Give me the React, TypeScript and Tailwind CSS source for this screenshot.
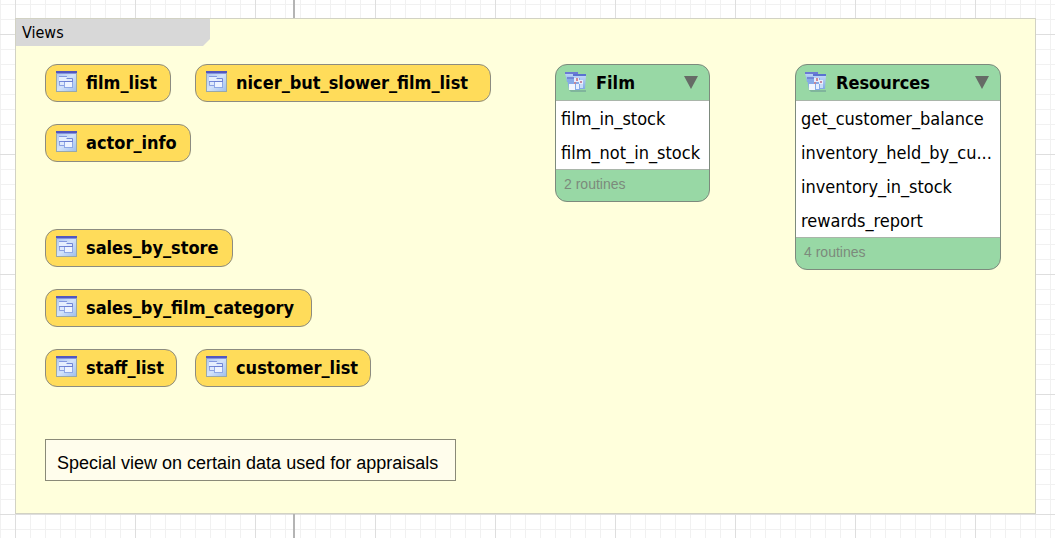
import type { ReactNode } from "react";

function ViewIcon() {
  return (
    <svg width="21" height="21" viewBox="0 0 21 21" aria-hidden="true" className="shrink-0">
      <defs>
        <linearGradient id="viewBody" x1="0" y1="0" x2="1" y2="1">
          <stop offset="0" stopColor="#a9c2f0" />
          <stop offset="0.5" stopColor="#d3e3fa" />
          <stop offset="1" stopColor="#9cbdec" />
        </linearGradient>
      </defs>
      <rect x="0.5" y="0.5" width="20" height="20" fill="url(#viewBody)" stroke="#9aa9a8" />
      <rect x="0" y="0" width="21" height="2" fill="#5257bf" />
      <rect x="1" y="2" width="19" height="1" fill="#8593de" />
      <rect x="3" y="5" width="8" height="6" fill="#e6effd" />
      <rect x="3" y="5" width="8" height="1" fill="#8398e0" />
      <path d="M10.5 7.500h6v4" fill="none" stroke="#7388d8" />
      <rect x="11" y="8" width="5" height="2" fill="#dfeafc" />
      <path d="M3.500 10.500v4h5" fill="none" stroke="#8da2e2" />
      <rect x="3" y="10" width="6" height="1" fill="#7388d8" />
      <rect x="4" y="11" width="4" height="3" fill="#dfeafc" />
      <rect x="8" y="10" width="9" height="7" fill="#8fa9e6" />
      <rect x="9" y="11" width="7" height="5" fill="#eef4ff" />
      <rect x="8" y="10" width="9" height="1" fill="#6c80d4" />
    </svg>
  );
}

function RoutineIcon() {
  return (
    <svg width="22" height="22" viewBox="0 0 22 22" aria-hidden="true" className="shrink-0">
      <defs>
        <linearGradient id="routineBody" x1="0" y1="0" x2="0" y2="1">
          <stop offset="0" stopColor="#c3d9f8" />
          <stop offset="1" stopColor="#7fa9e4" />
        </linearGradient>
      </defs>
      <path d="M4 18h17v2H6z" fill="#6f9f96" opacity="0.6" />
      <path d="M0 1h13v9H2z" fill="url(#routineBody)" />
      <rect x="0" y="0" width="13" height="2" fill="#6c7ad4" />
      <path d="M8 3h13l-1 14h-9z" fill="url(#routineBody)" />
      <rect x="8" y="2" width="13" height="2" fill="#5a72d0" />
      <path d="M2 6h13v12H4z" fill="#86aae8" />
      <rect x="2" y="5" width="7" height="2" fill="#7488d8" />
      <rect x="4" y="12" width="6" height="6" fill="#f2f6ff" />
      <path d="M9 6h5v4H9zM14 8h4v4h-4z" fill="#e8eefc" />
      <rect x="11" y="12" width="3" height="5" fill="#e8f0ff" />
      <rect x="15" y="12" width="3" height="4" fill="#c8dcf8" />
      <rect x="11" y="6" width="2" height="3" fill="#cf8796" />
      <rect x="9" y="10" width="2" height="2" fill="#c4899c" />
      <rect x="15" y="9" width="2" height="2" fill="#c58ba2" />
    </svg>
  );
}

function ViewNode({ name, place }: { name: string; place: string }) {
  return (
    <div
      className={`absolute flex h-[38px] items-center gap-[9px] rounded-xl border border-[#8c8c80] bg-[#ffdc5a] pr-[11px] pl-[10px] text-lg font-bold whitespace-nowrap ${place}`}
    >
      <div className="pb-1">
        <ViewIcon />
      </div>
      <span>{name}</span>
    </div>
  );
}

function RoutineGroup({ name, routines, place }: { name: string; routines: string[]; place: string }) {
  return (
    <section className={`absolute overflow-hidden rounded-xl border border-[#7d8a7d] bg-[#98d8a5] ${place}`}>
      <header className="flex h-[35px] items-center gap-[9px] pr-[11px] pl-[9px]">
        <RoutineIcon />
        <h2 className="flex-1 text-lg font-bold">{name}</h2>
        <button type="button" aria-label={`Collapse ${name}`}>
          <svg width="14" height="13" viewBox="0 0 14 13">
            <path d="M0 0h14L7 13z" fill="#666b66" />
          </svg>
        </button>
      </header>
      <ul className="border-y border-[#a9b5a9] bg-white text-lg">
        {routines.map((routine) => (
          <li key={routine} className="h-[34px] pl-[5px] leading-[36px] whitespace-nowrap">
            {routine}
          </li>
        ))}
      </ul>
      <footer className="h-[31px] pl-2 font-['Liberation_Sans',sans-serif] text-sm leading-[28px] text-[#7c8a7c]">
        {routines.length} routines
      </footer>
    </section>
  );
}

function Layer({ title, children }: { title: string; children: ReactNode }) {
  return (
    <section className="relative h-[496px] border border-[#d2d2c4] bg-[#ffffdc]">
      <h1 className="h-[27px] w-[194px] bg-[#d8d8d8] pl-[6px] text-base leading-[27px] [clip-path:polygon(0_0,100%_0,100%_20px,187px_100%,0_100%)]">
        {title}
      </h1>
      {children}
    </section>
  );
}

export default function App() {
  return (
    <main className="relative min-h-screen bg-white bg-[linear-gradient(90deg,#dedede_1px,transparent_1px),linear-gradient(#dedede_1px,transparent_1px),linear-gradient(90deg,#f1f1f1_1px,transparent_1px),linear-gradient(#f1f1f1_1px,transparent_1px)] bg-[size:120px_120px,120px_120px,15px_15px,15px_15px] bg-[position:15px_34px,15px_34px,0_4px,0_4px] pt-[18px] pr-[19px] pb-6 pl-[15px] font-['DejaVu_Sans_Condensed',Tahoma,'DejaVu_Sans',sans-serif] text-black">
      <div className="absolute inset-y-0 left-[293px] w-[2px] bg-[#b4b4b4]" />
      <Layer title="Views">
        <ViewNode name="film_list" place="top-[45px] left-[29px] min-w-[126px]" />
        <ViewNode name="nicer_but_slower_film_list" place="top-[45px] left-[179px] min-w-[296px]" />
        <ViewNode name="actor_info" place="top-[105px] left-[29px] min-w-[146px]" />
        <ViewNode name="sales_by_store" place="top-[210px] left-[29px] min-w-[188px]" />
        <ViewNode name="sales_by_film_category" place="top-[270px] left-[29px] min-w-[267px]" />
        <ViewNode name="staff_list" place="top-[330px] left-[29px] min-w-[132px]" />
        <ViewNode name="customer_list" place="top-[330px] left-[179px] min-w-[176px]" />
        <RoutineGroup
          name="Film"
          routines={["film_in_stock", "film_not_in_stock"]}
          place="top-[45px] left-[539px] w-[155px]"
        />
        <RoutineGroup
          name="Resources"
          routines={["get_customer_balance", "inventory_held_by_cu...", "inventory_in_stock", "rewards_report"]}
          place="top-[45px] left-[779px] w-[206px]"
        />
        <p className="absolute top-[420px] left-[29px] h-[42px] w-[411px] border border-[#8a8a78] bg-[#fffdec] pl-[11px] font-['Liberation_Sans',sans-serif] text-lg leading-[46px] whitespace-nowrap">
          Special view on certain data used for appraisals
        </p>
      </Layer>
    </main>
  );
}
